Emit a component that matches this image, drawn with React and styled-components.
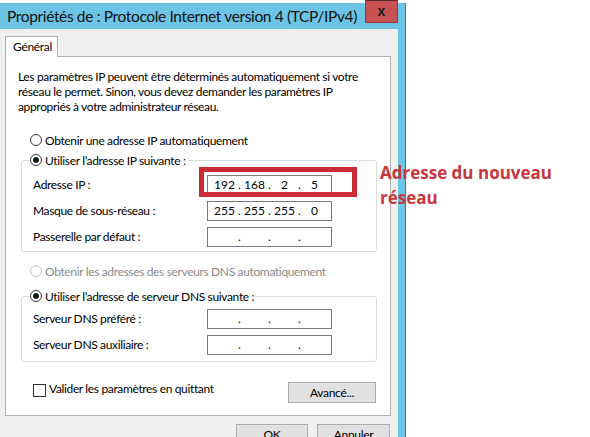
import React from "react";
import styled, { createGlobalStyle } from "styled-components";

const UI_FONT = `Lato, "Open Sans", "Liberation Sans", sans-serif`;

const GlobalStyle = createGlobalStyle`
  html, body { margin: 0; padding: 0; background: #ffffff; }
  body { font-family: ${UI_FONT}; color: #000; }
  * { box-sizing: border-box; }
`;

const Page = styled.div`
  position: relative;
  width: 590px;
  height: 437px;
  overflow: hidden;
  background: #ffffff;
`;

const Window = styled.div`
  display: flex;
  flex-direction: column;
  width: 406px;
  height: 434px;
  margin-top: 3px;
  padding-right: 7px;
  background: #6cc4e6;
  border-right: 1px solid #3f7188;
`;

const TitleBar = styled.div`
  display: flex;
  align-items: flex-start;
  justify-content: space-between;
  height: 29px;
  padding-left: 7px;
`;

const Title = styled.div`
  font-size: 15.5px;
  line-height: 26px;
  letter-spacing: -0.36px;
  color: #111;
  white-space: nowrap;
`;

const CloseButton = styled.div`
  display: flex;
  align-items: center;
  justify-content: center;
  width: 33px;
  height: 23px;
  margin-top: -3px;
  background: #c75050;
  border: 1px solid #8f3a3a;
  border-top-color: #5a2a2a;
  font-family: "Liberation Sans", sans-serif;
  font-weight: bold;
  font-size: 14px;
  color: #1a1a1a;
  padding-bottom: 2px;
`;

const Body = styled.div`
  flex: 1;
  display: flex;
  flex-direction: column;
  background: #f0f0f0;
  padding: 7px 7px 0 5px;
`;

const TabStrip = styled.div`
  display: flex;
  height: 21px;
  margin-bottom: -1px;
  position: relative;
  z-index: 1;
`;

const Tab = styled.div`
  width: 53px;
  height: 21px;
  background: #ffffff;
  border: 1px solid #adadad;
  border-bottom: none;
  font-size: 12px;
  line-height: 20px;
  letter-spacing: -0.3px;
  padding-left: 7px;
`;

const Panel = styled.div`
  display: flex;
  flex-direction: column;
  height: 360px;
  background: #ffffff;
  border: 1px solid #b4b4b4;
  font-size: 12px;
  letter-spacing: -0.35px;
`;

const Intro = styled.p`
  margin: 12px 0 0 0;
  padding-left: 12px;
  line-height: 15px;
  white-space: pre-line;
`;

const RadioRow = styled.label`
  display: flex;
  align-items: center;
  height: 16px;
  margin-top: ${(p) => p.$top || 0}px;
  padding-left: ${(p) => (p.$legend ? 0 : 24)}px;
  color: ${(p) => (p.$disabled ? "#8a8a8a" : "#000")};
`;

const RadioDot = styled.span`
  position: relative;
  width: 12px;
  height: 12px;
  border-radius: 50%;
  border: 1px solid ${(p) => (p.$disabled ? "#c2c2c2" : "#333")};
  background: #fff;
  margin-right: 3px;
  flex-shrink: 0;
  &::after {
    content: "";
    display: ${(p) => (p.$checked ? "block" : "none")};
    position: absolute;
    left: 2px;
    top: 2px;
    width: 6px;
    height: 6px;
    border-radius: 50%;
    background: #1a1a1a;
  }
`;

const Group = styled.fieldset`
  margin: ${(p) => p.$top || 0}px 13px 0 15px;
  padding: ${(p) => p.$padTop}px 0 ${(p) => p.$padBottom}px 11px;
  border: 1px solid #dcdcdc;
  border-radius: 3px;
  min-width: 0;
`;

const Legend = styled.legend`
  padding: 0 2px 0 0;
  margin-left: -3px;
  height: 16px;
  background: #fff;
`;

const FieldGrid = styled.div`
  display: grid;
  grid-template-columns: 174px 125px;
  row-gap: 6px;
  align-items: center;
`;

const FieldLabel = styled.span`
  line-height: 16px;
`;

const IpBox = styled.div`
  display: flex;
  align-items: center;
  height: 20px;
  width: 125px;
  border: 1px solid #7a7a7a;
  padding-left: 3.5px;
  background: #fff;
  letter-spacing: 0;
`;

const Octet = styled.span`
  width: 26px;
  text-align: center;
  line-height: 18px;
`;

const Dot = styled.span`
  width: 4px;
  text-align: center;
  line-height: 18px;
`;

const BottomRow = styled.div`
  display: flex;
  justify-content: space-between;
  align-items: flex-start;
  margin-top: 18px;
  padding: 0 14px 0 27px;
`;

const CheckRow = styled.label`
  display: flex;
  align-items: center;
  height: 16px;
`;

const CheckBox = styled.span`
  width: 13px;
  height: 13px;
  border: 1px solid #333;
  background: #fff;
  margin-right: 3px;
  margin-top: 5px;
`;

const Button = styled.div`
  display: flex;
  align-items: center;
  justify-content: center;
  width: ${(p) => p.$w}px;
  height: 21px;
  background: #e1e1e1;
  border: 1px solid #adadad;
  font-size: 12px;
  letter-spacing: -0.3px;
  margin-top: ${(p) => p.$top || 0}px;
`;

const ButtonRow = styled.div`
  display: flex;
  justify-content: flex-end;
  gap: 9px;
  margin-top: 8px;
  padding-right: 1px;
`;

const Highlight = styled.div`
  position: absolute;
  left: 199px;
  top: 167px;
  width: 158px;
  height: 30px;
  border: 5px solid #cc2b35;
`;

const Annotation = styled.div`
  position: absolute;
  left: 380px;
  top: 160px;
  font-family: "Open Sans", "Noto Sans", sans-serif;
  font-weight: bold;
  font-size: 17px;
  line-height: 25px;
  color: #c8353d;
`;

function IpField({ value }) {
  const parts = value ? value.split(".") : ["", "", "", ""];
  return (
    <IpBox>
      {parts.map((p, i) => (
        <React.Fragment key={i}>
          <Octet>{p}</Octet>
          {i < 3 && <Dot>.</Dot>}
        </React.Fragment>
      ))}
    </IpBox>
  );
}

function Radio({ checked, disabled, children, top, legend }) {
  return (
    <RadioRow $top={top} $disabled={disabled} $legend={legend}>
      <RadioDot $checked={checked} $disabled={disabled} />
      {children}
    </RadioRow>
  );
}

export default function App() {
  return (
    <>
      <GlobalStyle />
      <Page>
        <Window>
          <TitleBar>
            <Title>Propriétés de : Protocole Internet version 4 (TCP/IPv4)</Title>
            <CloseButton>x</CloseButton>
          </TitleBar>
          <Body>
            <TabStrip>
              <Tab>Général</Tab>
            </TabStrip>
            <Panel>
              <Intro>
                {"Les paramètres IP peuvent être déterminés automatiquement si votre\nréseau le permet. Sinon, vous devez demander les paramètres IP\nappropriés à votre administrateur réseau."}
              </Intro>
              <Radio top={18}>Obtenir une adresse IP automatiquement</Radio>
              <Group $top={4} $padTop={7} $padBottom={4}>
                <Legend>
                  <Radio checked legend>
                    Utiliser l’adresse IP suivante :
                  </Radio>
                </Legend>
                <FieldGrid>
                  <FieldLabel>Adresse IP :</FieldLabel>
                  <IpField value="192.168.2.5" />
                  <FieldLabel>Masque de sous-réseau :</FieldLabel>
                  <IpField value="255.255.255.0" />
                  <FieldLabel>Passerelle par défaut :</FieldLabel>
                  <IpField />
                </FieldGrid>
              </Group>
              <Radio top={11} disabled>
                Obtenir les adresses des serveurs DNS automatiquement
              </Radio>
              <Group $top={9} $padTop={5} $padBottom={6}>
                <Legend>
                  <Radio checked legend>
                    Utiliser l’adresse de serveur DNS suivante :
                  </Radio>
                </Legend>
                <FieldGrid>
                  <FieldLabel>Serveur DNS préféré :</FieldLabel>
                  <IpField />
                  <FieldLabel>Serveur DNS auxiliaire :</FieldLabel>
                  <IpField />
                </FieldGrid>
              </Group>
              <BottomRow>
                <CheckRow>
                  <CheckBox />
                  Valider les paramètres en quittant
                </CheckRow>
                <Button $w={88} $top={2}>Avancé...</Button>
              </BottomRow>
            </Panel>
            <ButtonRow>
              <Button $w={72}>OK</Button>
              <Button $w={73}>Annuler</Button>
            </ButtonRow>
          </Body>
        </Window>
        <Highlight />
        <Annotation>
          Adresse du nouveau
          <br />
          réseau
        </Annotation>
      </Page>
    </>
  );
}
